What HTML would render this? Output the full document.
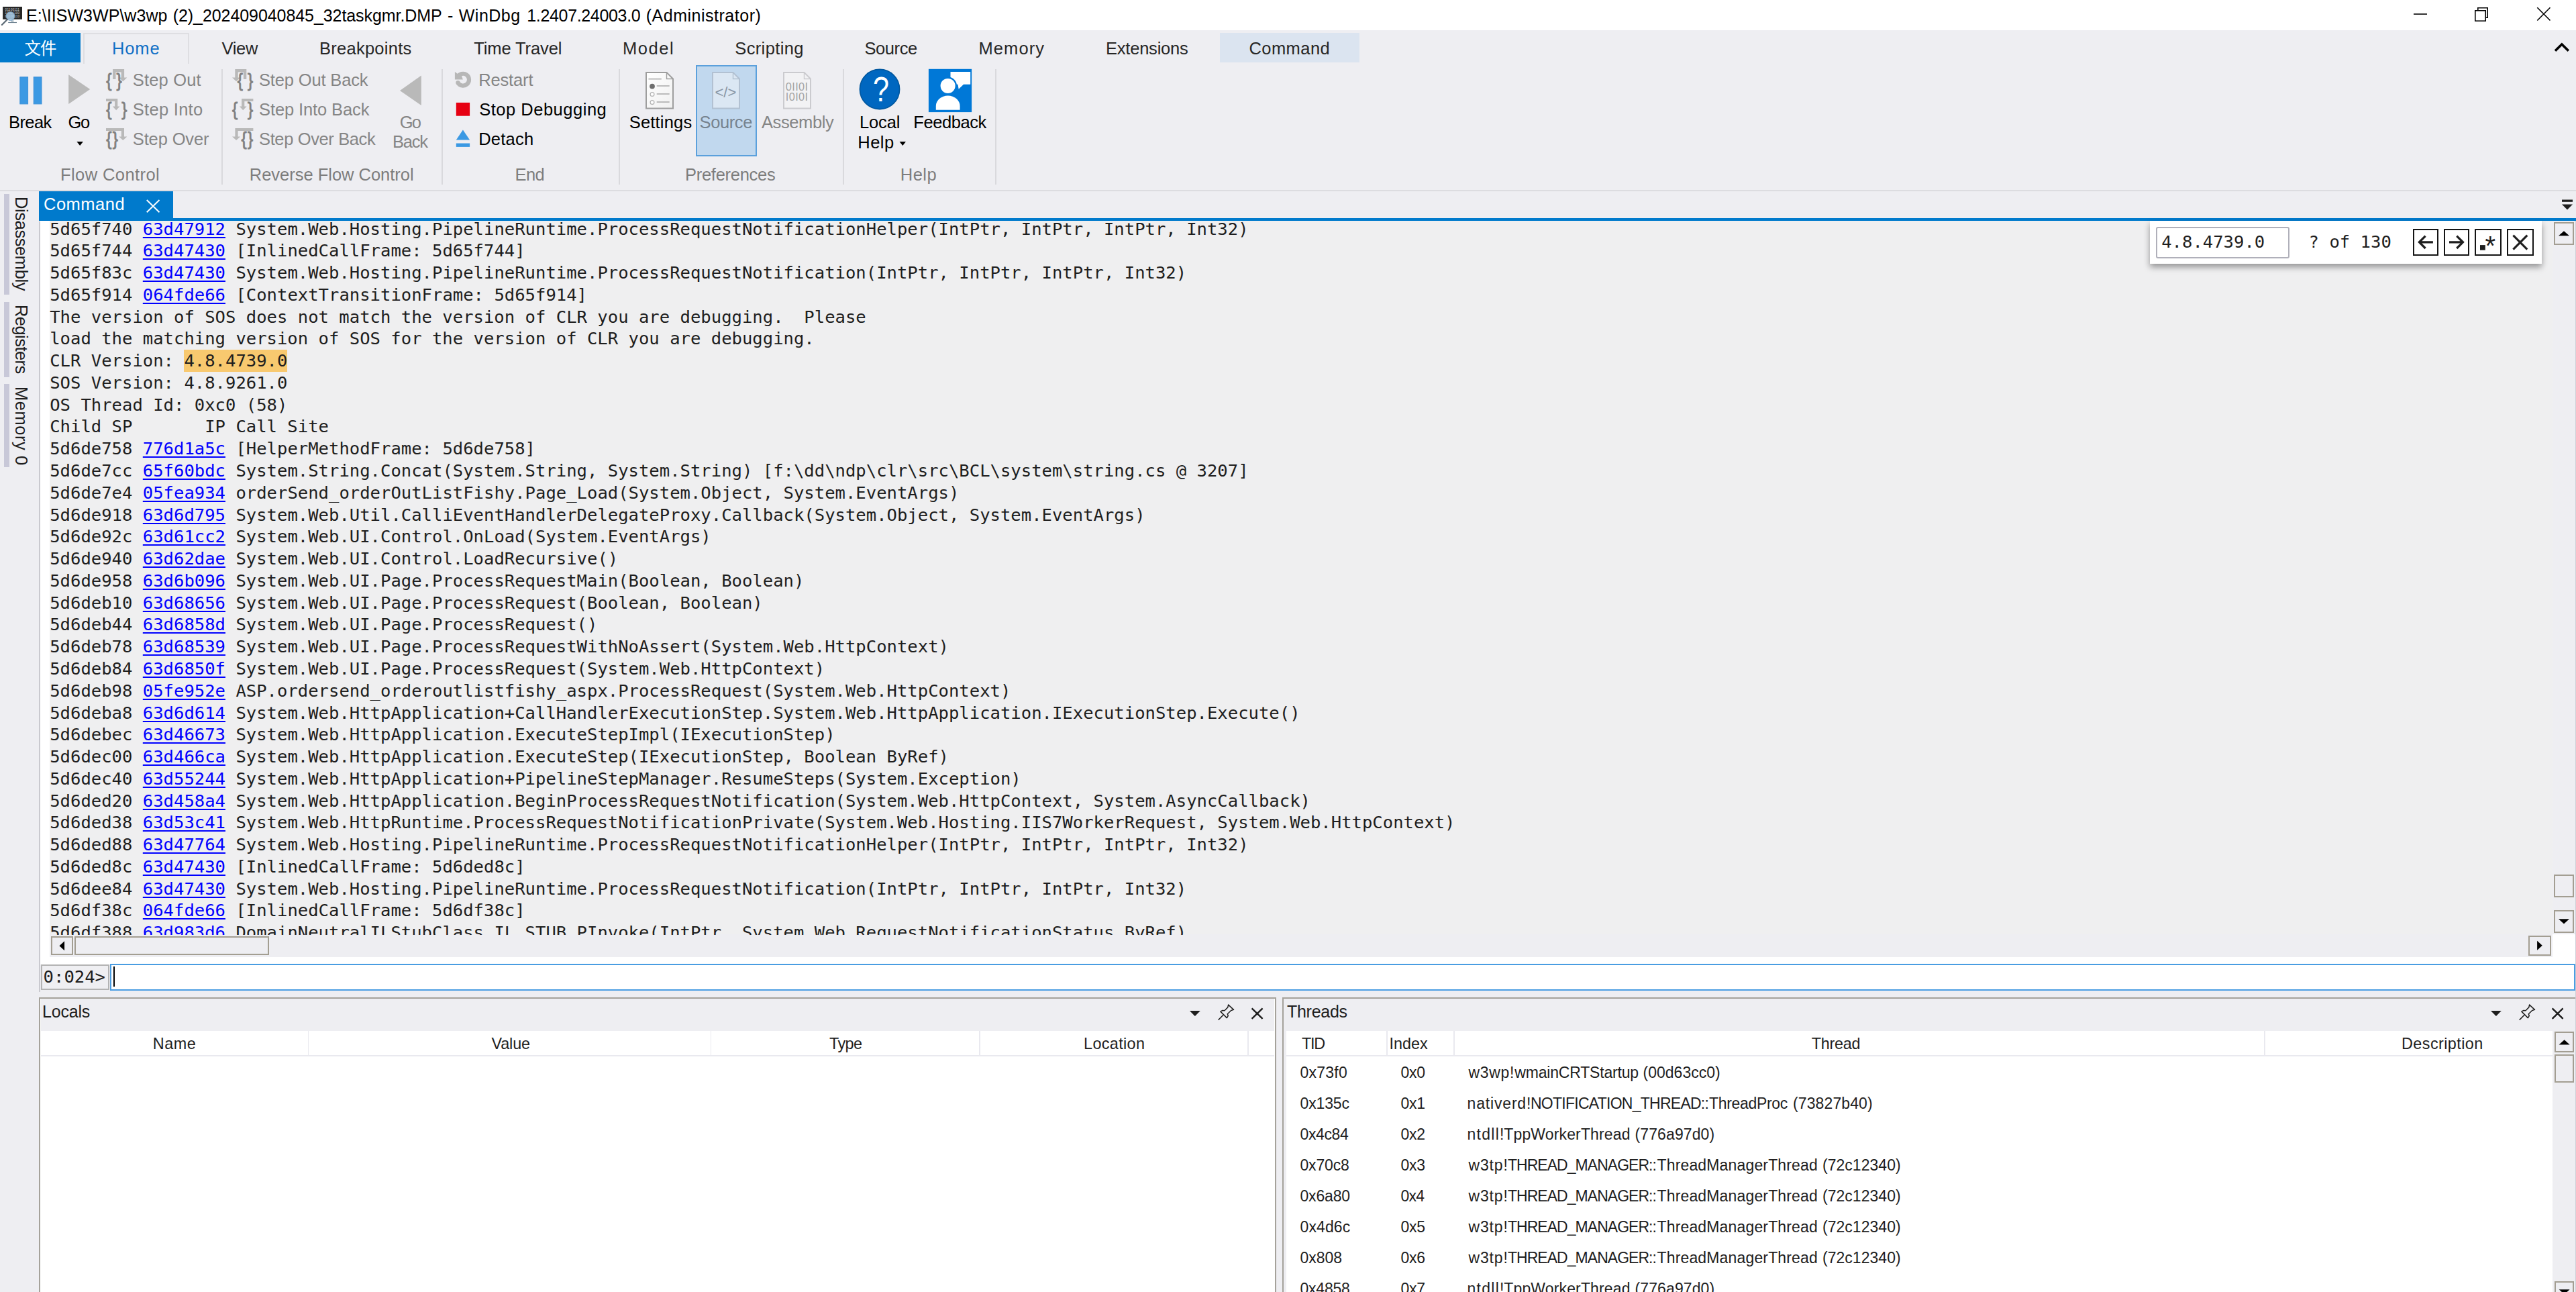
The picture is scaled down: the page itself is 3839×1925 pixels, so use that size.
<!DOCTYPE html>
<html><head><meta charset="utf-8"><title>WinDbg</title>
<style>
html,body{margin:0;padding:0;}
body{width:3839px;height:1925px;overflow:hidden;background:#eeeef2;position:relative;font-family:'Liberation Sans', sans-serif;}
.a{position:absolute;box-sizing:border-box;}
.t{white-space:pre;}

.mono{font:25.593px 'DejaVu Sans Mono', 'Liberation Mono', monospace;color:#1e1e1e;white-space:pre;}
.ml{position:absolute;left:0.2px;height:32.774px;line-height:32.774px;}
.lk{color:#0000ff;text-decoration:underline;text-decoration-thickness:1.6px;text-underline-offset:3px;}

</style></head><body>
<div class="a" style="left:0px;top:0px;width:3839px;height:45px;background:#fff;"></div>
<svg class="a" style="left:0px;top:0px;" width="40" height="45" viewBox="0 0 40 45">
<rect x="4.1" y="10" width="28.9" height="18.8" fill="#262626"/>
<text x="7.6" y="16.4" font-family="Liberation Sans, sans-serif" font-size="4.6" fill="#dcdcdc" letter-spacing="0.25">01100111</text>
<text x="7.6" y="21.4" font-family="Liberation Sans, sans-serif" font-size="4.6" fill="#dcdcdc" letter-spacing="0.25">10011100</text>
<text x="7.6" y="26.4" font-family="Liberation Sans, sans-serif" font-size="4.6" fill="#dcdcdc" letter-spacing="0.25">01100110</text>
<rect x="16.3" y="28.8" width="4.1" height="4.3" fill="#b9c6cf"/>
<line x1="12.2" y1="33.5" x2="25" y2="33.5" stroke="#6e8291" stroke-width="1.2"/>
<circle cx="15.5" cy="24.1" r="6.4" fill="#a9cbe6" fill-opacity="0.88" stroke="#7ea6c8" stroke-width="0.9"/>
<line x1="10.9" y1="29" x2="2.9" y2="37" stroke="#5c6a76" stroke-width="2.3" stroke-linecap="round"/>
</svg>
<svg class="a" style="left:3580px;top:0px;" width="259" height="45" viewBox="0 0 259 45">
<line x1="17" y1="21" x2="37" y2="21" stroke="#000" stroke-width="1.6"/>
<rect x="108.8" y="15.8" width="15.4" height="15.4" fill="none" stroke="#000" stroke-width="1.6"/>
<path d="M112.8 15 V11.8 H127.2 V26.2 H124.5" fill="none" stroke="#000" stroke-width="1.6"/>
<path d="M201.3 11.3 L220.5 30.5 M220.5 11.3 L201.3 30.5" fill="none" stroke="#000" stroke-width="1.6"/>
</svg>
<div class="a" style="left:0px;top:49px;width:120px;height:44px;background:#0079cb;"></div>
<div class="a" style="left:124px;top:49px;width:158px;height:45.75px;background:#eeeef2;border:2px solid #dedee2;border-bottom:none;"></div>
<div class="a" style="left:1818px;top:49px;width:208px;height:43.75px;background:#dbe4f0;"></div>
<svg class="a" style="left:3800px;top:58px;" width="36" height="26" viewBox="0 0 36 26"><polyline points="8,17.8 17.9,8 27.8,17.8" fill="none" stroke="#000" stroke-width="3.6"/></svg>
<div class="a" style="left:330.25px;top:103px;width:1.5px;height:171.5px;background:#d9d9dd;"></div>
<div class="a" style="left:658.25px;top:103px;width:1.5px;height:171.5px;background:#d9d9dd;"></div>
<div class="a" style="left:922.15px;top:103px;width:1.5px;height:171.5px;background:#d9d9dd;"></div>
<div class="a" style="left:1256.35px;top:103px;width:1.5px;height:171.5px;background:#d9d9dd;"></div>
<div class="a" style="left:1483.15px;top:103px;width:1.5px;height:171.5px;background:#d9d9dd;"></div>
<div class="a" style="left:0px;top:283px;width:3839px;height:1.5px;background:#dcdce0;"></div>
<svg class="a" style="left:20px;top:105px;" width="130" height="120" viewBox="0 0 130 120">
<rect x="9.8" y="9.8" width="11.8" height="40.1" fill="#3b99e3" stroke="#3c8fd8" stroke-width="1"/>
<rect x="30.2" y="9.8" width="11.8" height="40.1" fill="#3b99e3" stroke="#3c8fd8" stroke-width="1"/>
<polygon points="82.2,6.3 114.2,27.9 82.2,50" fill="#b9b9b9"/>
<polygon points="94.4,106 103.9,106 99.15,111.9" fill="#000"/>
</svg>
<svg class="a" style="left:158.2px;top:103.2px;overflow:visible;" width="32" height="34" viewBox="0 0 32 34"><path d="M12.3 15 V2.2 H24.9 V13" fill="none" stroke="#b9b9b9" stroke-width="4.4"/><polygon points="19.2,12.5 31.4,12.5 25.3,18.2" fill="#b9b9b9"/><text transform="translate(4.3,25.9) scale(0.86,1)" text-anchor="middle" font-family="Liberation Sans, sans-serif" font-size="28.5" fill="#808080" stroke="#808080" stroke-width="0.9">{</text><text transform="translate(19.5,25.9) scale(0.86,1)" text-anchor="middle" font-family="Liberation Sans, sans-serif" font-size="28.5" fill="#808080" stroke="#808080" stroke-width="0.9">}</text></svg>
<svg class="a" style="left:158.2px;top:147.4px;overflow:visible;" width="32" height="34" viewBox="0 0 32 34"><path d="M0 2 H15.2 V12" fill="none" stroke="#b9b9b9" stroke-width="4.2"/><polygon points="9.8,11.6 20.5,11.6 15.15,17.2" fill="#b9b9b9"/><text transform="translate(4.3,25.4) scale(0.86,1)" text-anchor="middle" font-family="Liberation Sans, sans-serif" font-size="28.5" fill="#808080" stroke="#808080" stroke-width="0.9">{</text><text transform="translate(27.3,25.4) scale(0.86,1)" text-anchor="middle" font-family="Liberation Sans, sans-serif" font-size="28.5" fill="#808080" stroke="#808080" stroke-width="0.9">}</text></svg>
<svg class="a" style="left:158.2px;top:191.3px;overflow:visible;" width="32" height="34" viewBox="0 0 32 34"><path d="M0 2 H24.9 V13" fill="none" stroke="#b9b9b9" stroke-width="4.2"/><polygon points="19.2,12.5 31.4,12.5 25.3,17.9" fill="#b9b9b9"/><text transform="translate(4.3,25.4) scale(0.86,1)" text-anchor="middle" font-family="Liberation Sans, sans-serif" font-size="28.5" fill="#808080" stroke="#808080" stroke-width="0.9">{</text><text transform="translate(13.9,25.4) scale(0.86,1)" text-anchor="middle" font-family="Liberation Sans, sans-serif" font-size="28.5" fill="#808080" stroke="#808080" stroke-width="0.9">}</text></svg>
<svg class="a" style="left:346.2px;top:103.2px;overflow:visible;" width="32" height="34" viewBox="0 0 32 34"><path d="M19.1 15 V2.2 H6.5 V13" fill="none" stroke="#b9b9b9" stroke-width="4.4"/><polygon points="12.2,12.5 0.0,12.5 6.1,18.2" fill="#b9b9b9"/><text transform="translate(27.1,25.9) scale(0.86,1)" text-anchor="middle" font-family="Liberation Sans, sans-serif" font-size="28.5" fill="#808080" stroke="#808080" stroke-width="0.9">}</text><text transform="translate(11.9,25.9) scale(0.86,1)" text-anchor="middle" font-family="Liberation Sans, sans-serif" font-size="28.5" fill="#808080" stroke="#808080" stroke-width="0.9">{</text></svg>
<svg class="a" style="left:346.2px;top:147.4px;overflow:visible;" width="32" height="34" viewBox="0 0 32 34"><path d="M31.4 2 H16.2 V12" fill="none" stroke="#b9b9b9" stroke-width="4.2"/><polygon points="21.6,11.6 10.9,11.6 16.25,17.2" fill="#b9b9b9"/><text transform="translate(27.1,25.4) scale(0.86,1)" text-anchor="middle" font-family="Liberation Sans, sans-serif" font-size="28.5" fill="#808080" stroke="#808080" stroke-width="0.9">}</text><text transform="translate(4.1,25.4) scale(0.86,1)" text-anchor="middle" font-family="Liberation Sans, sans-serif" font-size="28.5" fill="#808080" stroke="#808080" stroke-width="0.9">{</text></svg>
<svg class="a" style="left:346.2px;top:191.3px;overflow:visible;" width="32" height="34" viewBox="0 0 32 34"><path d="M31.4 2 H6.5 V13" fill="none" stroke="#b9b9b9" stroke-width="4.2"/><polygon points="12.2,12.5 0.0,12.5 6.1,17.9" fill="#b9b9b9"/><text transform="translate(27.1,25.4) scale(0.86,1)" text-anchor="middle" font-family="Liberation Sans, sans-serif" font-size="28.5" fill="#808080" stroke="#808080" stroke-width="0.9">}</text><text transform="translate(17.5,25.4) scale(0.86,1)" text-anchor="middle" font-family="Liberation Sans, sans-serif" font-size="28.5" fill="#808080" stroke="#808080" stroke-width="0.9">{</text></svg>
<svg class="a" style="left:590px;top:105px;" width="45" height="60" viewBox="0 0 45 60"><polygon points="37.8,7.5 6,29.9 37.8,52" fill="#b9b9b9"/></svg>
<svg class="a" style="left:672px;top:100px;" width="36" height="125" viewBox="0 0 36 125">
<path d="M10.03 14.94 A8.9 8.9 0 1 1 10.4 23.15" fill="none" stroke="#b7b7b7" stroke-width="6.2"/>
<circle cx="10.4" cy="23.15" r="3.1" fill="#b7b7b7"/>
<polygon points="5.9,7 9.5,9.8 15,9.8 17.8,18.4 5.9,18.4" fill="#b7b7b7"/>
<rect x="7.8" y="52.9" width="20.3" height="19.8" fill="#e60012"/>
<polygon points="17.9,93.4 28.1,108.5 7.8,108.5" fill="#3b99e3"/>
<rect x="7.8" y="113.5" width="20.3" height="5.4" fill="#3b99e3"/>
</svg>
<div class="a" style="left:1037px;top:97.3px;width:91.1px;height:135.6px;background:#c1d8ee;border:2px solid #5ba0dc;"></div>
<svg class="a" style="left:962px;top:107.3px;overflow:visible;" width="42" height="55.4" viewBox="0 0 42 55.4"><path d="M1 1 H31.5 L41 10.5 V54.4 H1 Z" fill="url(#g1)" stroke="#9e9e9e" stroke-width="2"/><path d="M31.5 0.8 V10.5 H41.2" fill="none" stroke="#9e9e9e" stroke-width="1.4"/>
<defs><linearGradient id="g1" x1="0" y1="0" x2="1" y2="1"><stop offset="0" stop-color="#fff"/><stop offset="1" stop-color="#f0f0f0"/></linearGradient></defs>
<line x1="4.4" y1="10.7" x2="23.8" y2="10.7" stroke="#a8a8a8" stroke-width="1.5"/>
<circle cx="10" cy="21.6" r="3.9" fill="#6e6e6e"/>
<circle cx="10" cy="33.5" r="2.9" fill="#fff" stroke="#b4b4b4" stroke-width="1.3"/>
<circle cx="10" cy="45.6" r="2.9" fill="#fff" stroke="#b4b4b4" stroke-width="1.3"/>
<line x1="16.7" y1="21" x2="35.7" y2="21" stroke="#a8a8a8" stroke-width="1.5"/>
<line x1="16.7" y1="33" x2="35.7" y2="33" stroke="#a8a8a8" stroke-width="1.5"/>
<line x1="16.7" y1="45" x2="35.7" y2="45" stroke="#a8a8a8" stroke-width="1.5"/>
</svg>
<svg class="a" style="left:1061px;top:107.3px;overflow:visible;" width="42" height="55.4" viewBox="0 0 42 55.4"><path d="M1 1 H31.5 L41 10.5 V54.4 H1 Z" fill="#dbe7f3" stroke="#b2c1d2" stroke-width="2"/><path d="M31.5 0.8 V10.5 H41.2" fill="none" stroke="#b2c1d2" stroke-width="1.4"/>
<text x="20.4" y="38.4" text-anchor="middle" font-family="Liberation Sans, sans-serif" font-size="22" fill="#8896a6">&lt;/&gt;</text>
</svg>
<svg class="a" style="left:1167px;top:107.3px;overflow:visible;" width="42" height="55.4" viewBox="0 0 42 55.4"><path d="M1 1 H31.5 L41 10.5 V54.4 H1 Z" fill="#f2f2f4" stroke="#cbcbcf" stroke-width="2"/><path d="M31.5 0.8 V10.5 H41.2" fill="none" stroke="#cbcbcf" stroke-width="1.4"/>
<text x="20.6" y="27.6" text-anchor="middle" font-family="Liberation Sans, sans-serif" font-size="16.3" fill="#a3a3a3" letter-spacing="0.4">0II0I</text>
<text x="20.6" y="43.1" text-anchor="middle" font-family="Liberation Sans, sans-serif" font-size="16.3" fill="#a3a3a3" letter-spacing="0.4">I0I0I</text>
</svg>
<svg class="a" style="left:1278px;top:100px;" width="175" height="125" viewBox="0 0 175 125">
<circle cx="33" cy="33" r="29.6" fill="#0067c0" stroke="#00579f" stroke-width="1.6"/>
<text transform="translate(35,50.9) scale(0.84,1)" x="0" y="0" text-anchor="middle" font-family="Liberation Sans, sans-serif" font-size="51.5" fill="#fff">?</text>
<rect x="105.9" y="2.8" width="64.2" height="64.3" fill="#0078d7"/>
<path d="M138.5 6.9 H168.2 V25.7 H158 L150.7 32.8 L149.5 25.7 H138.5 Z" fill="#fff"/>
<circle cx="134.6" cy="27.9" r="13.4" fill="#0078d7"/>
<circle cx="134.6" cy="27.9" r="11" fill="#fff"/>
<path d="M116.8 63.7 V58 A17.9 15.4 0 0 1 152.6 58 V63.7 Z" fill="#fff"/>
<polygon points="62.5,111 72,111 67.25,116.9" fill="#000"/>
</svg>
<div class="a" style="left:6px;top:289.2px;width:7.8px;height:149.5px;background:#c8c8d8;"></div>
<div class="a" style="left:6px;top:449.6px;width:7.8px;height:112.6px;background:#c8c8d8;"></div>
<div class="a" style="left:6px;top:572.4px;width:7.8px;height:124.1px;background:#c8c8d8;"></div>
<div class="a" style="left:58px;top:285px;width:200px;height:41px;background:#007acc;"></div>
<div class="a" style="left:58px;top:325px;width:3781px;height:4px;background:#007acc;"></div>
<svg class="a" style="left:214px;top:294px;" width="28" height="26" viewBox="0 0 28 26"><path d="M4.75 4 L23.5 22.25 M23.5 4 L4.75 22.25" stroke="#fff" stroke-width="1.9" fill="none"/></svg>
<svg class="a" style="left:3812px;top:292px;" width="26" height="24" viewBox="0 0 26 24"><rect x="6" y="5.5" width="16" height="3.3" fill="#1e1e1e"/><polygon points="6,12.5 22,12.5 14,20.5" fill="#1e1e1e"/></svg>
<div class="a" style="left:58px;top:329.5px;width:2px;height:1148px;background:#c9c9cf;"></div>
<div class="a" style="left:60px;top:329px;width:3779px;height:1108px;background:#fff;"></div>
<div class="a" style="left:74px;top:329px;width:3730px;height:1063.5px;background:#efeff0;"></div>
<div class="a" style="left:3804px;top:329px;width:35px;height:1063px;background:#eeeef2;"></div>
<div class="a" style="left:74px;top:1392px;width:3730px;height:33.9px;background:#eeeef2;"></div>
<div class="a" style="left:3806px;top:331px;width:30px;height:33.5px;background:#eeeef2;border:2px solid #a39e92;"></div>
<svg class="a" style="left:3806px;top:331px;" width="30" height="33.5" viewBox="0 0 30 33.5"><polygon points="7.0,20.35 23.0,20.35 15.0,13.15" fill="#000"/></svg>
<div class="a" style="left:3806px;top:1302.5px;width:30px;height:34.5px;background:#eeeef2;border:2px solid #a39e92;"></div>
<div class="a" style="left:3806px;top:1356.1px;width:30px;height:33.9px;background:#eeeef2;border:2px solid #a39e92;"></div>
<svg class="a" style="left:3806px;top:1356.1px;" width="30" height="33.9" viewBox="0 0 30 33.9"><polygon points="7.0,13.35 23.0,13.35 15.0,20.55" fill="#000"/></svg>
<div class="a" style="left:76.25px;top:1394.5px;width:32.5px;height:28.5px;background:#eeeef2;border:2px solid #a39e92;"></div>
<svg class="a" style="left:76.25px;top:1394.5px;" width="32.5" height="28.5" viewBox="0 0 32.5 28.5"><polygon points="20.05,7.25 20.05,21.25 12.45,14.25" fill="#000"/></svg>
<div class="a" style="left:111.25px;top:1394.5px;width:290px;height:28.5px;background:#eeeef2;border:2px solid #a39e92;"></div>
<div class="a" style="left:3768.1px;top:1394.2px;width:33.9px;height:29.7px;background:#eeeef2;border:2px solid #a39e92;"></div>
<svg class="a" style="left:3768.1px;top:1394.2px;" width="33.9" height="29.7" viewBox="0 0 33.9 29.7"><polygon points="13.149999999999999,7.85 13.149999999999999,21.85 20.75,14.85" fill="#000"/></svg>
<div class="a" style="left:60.5px;top:1436.75px;width:102.75px;height:38.6px;background:#efeff2;border:2px solid #b3b3b3;"></div>
<div class="a" style="left:164.25px;top:1436px;width:3673.75px;height:39.8px;background:#fff;border:2px solid #4a9de2;"></div>
<div class="a" style="left:169.2px;top:1439.5px;width:1.6px;height:30.5px;background:#000;"></div>
<div class="a" style="left:58px;top:1486px;width:1843.75px;height:440px;background:#fff;border:2.5px solid #a5a29b;border-bottom:none;"></div>
<div class="a" style="left:60.5px;top:1488px;width:1838.75px;height:47.5px;background:#eeeef2;"></div>
<div class="a" style="left:1910.75px;top:1486px;width:1930px;height:440px;background:#fff;border:2.5px solid #a5a29b;border-bottom:none;border-right:none;"></div>
<div class="a" style="left:1913.25px;top:1488px;width:1926px;height:47.5px;background:#eeeef2;"></div>
<div class="a" style="left:1913.25px;top:1535.5px;width:3.75px;height:390px;background:#eeeef2;"></div>
<div class="a" style="left:3803.8px;top:1535.5px;width:36px;height:390px;background:#eeeef2;"></div>
<div class="a" style="left:60.5px;top:1572.3px;width:1838.75px;height:1.6px;background:#e9e9ef;"></div>
<div class="a" style="left:458.7px;top:1535.5px;width:1.6px;height:37px;background:#e9e9ef;"></div>
<div class="a" style="left:1058.7px;top:1535.5px;width:1.6px;height:37px;background:#e9e9ef;"></div>
<div class="a" style="left:1459.2px;top:1535.5px;width:1.6px;height:37px;background:#e9e9ef;"></div>
<div class="a" style="left:1859.2px;top:1535.5px;width:1.6px;height:37px;background:#e9e9ef;"></div>
<div class="a" style="left:1917px;top:1572.3px;width:1886.8px;height:1.6px;background:#e9e9ef;"></div>
<div class="a" style="left:2065.95px;top:1535.5px;width:1.6px;height:37px;background:#e9e9ef;"></div>
<div class="a" style="left:2165.95px;top:1535.5px;width:1.6px;height:37px;background:#e9e9ef;"></div>
<div class="a" style="left:3374.2px;top:1535.5px;width:1.6px;height:37px;background:#e9e9ef;"></div>
<div class="a" style="left:3806.5px;top:1536.8px;width:29.3px;height:31.6px;background:#eeeef2;border:2px solid #a39e92;"></div>
<svg class="a" style="left:3806.5px;top:1536.8px;" width="29.3" height="31.6" viewBox="0 0 29.3 31.6"><polygon points="6.65,19.400000000000002 22.65,19.400000000000002 14.65,12.200000000000001" fill="#000"/></svg>
<div class="a" style="left:3806.5px;top:1570.7px;width:29.3px;height:42.8px;background:#eeeef2;border:2px solid #a39e92;"></div>
<div class="a" style="left:3806.5px;top:1908.8px;width:29.3px;height:31.6px;background:#eeeef2;border:2px solid #a39e92;"></div>
<svg class="a" style="left:3806.5px;top:1908.8px;" width="29.3" height="31.6" viewBox="0 0 29.3 31.6"><polygon points="6.65,12.200000000000001 22.65,12.200000000000001 14.65,19.400000000000002" fill="#000"/></svg>
<svg class="a" style="left:1773px;top:1500px;" width="20" height="20" viewBox="0 0 20 20"><polygon points="0,6 15.8,6 7.9,14.1" fill="#1e1e1e"/></svg>
<svg class="a" style="left:1814.5px;top:1494px;" width="28" height="30" viewBox="0 0 28 30"><g fill="none" stroke="#1e1e1e" stroke-width="1.5" stroke-linejoin="round">
<path d="M15.6 3.1 L23.5 10.4 L19.7 11.5 L14.3 16.7 L15.3 19.4 L13.4 22.6 L3.9 13.1 L6.9 11.5 L9.9 11.8 L14.8 6.9 Z" fill="none"/>
<path d="M8.5 17.7 L0.7 25.6"/></g></svg>
<svg class="a" style="left:1862.5px;top:1499px;" width="22" height="22" viewBox="0 0 22 22"><path d="M2.6 3.3 L18.6 18.9 M18.6 3.3 L2.6 18.9" stroke="#1e1e1e" stroke-width="2.4" fill="none"/></svg>
<svg class="a" style="left:3712px;top:1500px;" width="20" height="20" viewBox="0 0 20 20"><polygon points="0,6 15.8,6 7.9,14.1" fill="#1e1e1e"/></svg>
<svg class="a" style="left:3754.4px;top:1494px;" width="28" height="30" viewBox="0 0 28 30"><g fill="none" stroke="#1e1e1e" stroke-width="1.5" stroke-linejoin="round">
<path d="M15.6 3.1 L23.5 10.4 L19.7 11.5 L14.3 16.7 L15.3 19.4 L13.4 22.6 L3.9 13.1 L6.9 11.5 L9.9 11.8 L14.8 6.9 Z" fill="none"/>
<path d="M8.5 17.7 L0.7 25.6"/></g></svg>
<svg class="a" style="left:3801.4px;top:1499px;" width="22" height="22" viewBox="0 0 22 22"><path d="M2.6 3.3 L18.6 18.9 M18.6 3.3 L2.6 18.9" stroke="#1e1e1e" stroke-width="2.4" fill="none"/></svg>
<div class="a" style="left:274.25px;top:521.25px;width:153.75px;height:32.5px;background:#f8c96f;"></div>
<div class="a mono" style="left:74px;top:329.5px;width:3729px;height:1063px;overflow:hidden;background:transparent;"><div class="ml" style="top:-5.0px">5d65f740 <span class="lk">63d47912</span> System.Web.Hosting.PipelineRuntime.ProcessRequestNotificationHelper(IntPtr, IntPtr, IntPtr, Int32)</div>
<div class="ml" style="top:27.77px">5d65f744 <span class="lk">63d47430</span> [InlinedCallFrame: 5d65f744]</div>
<div class="ml" style="top:60.55px">5d65f83c <span class="lk">63d47430</span> System.Web.Hosting.PipelineRuntime.ProcessRequestNotification(IntPtr, IntPtr, IntPtr, Int32)</div>
<div class="ml" style="top:93.32px">5d65f914 <span class="lk">064fde66</span> [ContextTransitionFrame: 5d65f914]</div>
<div class="ml" style="top:126.1px">The version of SOS does not match the version of CLR you are debugging.  Please</div>
<div class="ml" style="top:158.87px">load the matching version of SOS for the version of CLR you are debugging.</div>
<div class="ml" style="top:191.64px">CLR Version: 4.8.4739.0</div>
<div class="ml" style="top:224.42px">SOS Version: 4.8.9261.0</div>
<div class="ml" style="top:257.19px">OS Thread Id: 0xc0 (58)</div>
<div class="ml" style="top:289.97px">Child SP       IP Call Site</div>
<div class="ml" style="top:322.74px">5d6de758 <span class="lk">776d1a5c</span> [HelperMethodFrame: 5d6de758]</div>
<div class="ml" style="top:355.51px">5d6de7cc <span class="lk">65f60bdc</span> System.String.Concat(System.String, System.String) [f:\dd\ndp\clr\src\BCL\system\string.cs @ 3207]</div>
<div class="ml" style="top:388.29px">5d6de7e4 <span class="lk">05fea934</span> orderSend_orderOutListFishy.Page_Load(System.Object, System.EventArgs)</div>
<div class="ml" style="top:421.06px">5d6de918 <span class="lk">63d6d795</span> System.Web.Util.CalliEventHandlerDelegateProxy.Callback(System.Object, System.EventArgs)</div>
<div class="ml" style="top:453.84px">5d6de92c <span class="lk">63d61cc2</span> System.Web.UI.Control.OnLoad(System.EventArgs)</div>
<div class="ml" style="top:486.61px">5d6de940 <span class="lk">63d62dae</span> System.Web.UI.Control.LoadRecursive()</div>
<div class="ml" style="top:519.38px">5d6de958 <span class="lk">63d6b096</span> System.Web.UI.Page.ProcessRequestMain(Boolean, Boolean)</div>
<div class="ml" style="top:552.16px">5d6deb10 <span class="lk">63d68656</span> System.Web.UI.Page.ProcessRequest(Boolean, Boolean)</div>
<div class="ml" style="top:584.93px">5d6deb44 <span class="lk">63d6858d</span> System.Web.UI.Page.ProcessRequest()</div>
<div class="ml" style="top:617.71px">5d6deb78 <span class="lk">63d68539</span> System.Web.UI.Page.ProcessRequestWithNoAssert(System.Web.HttpContext)</div>
<div class="ml" style="top:650.48px">5d6deb84 <span class="lk">63d6850f</span> System.Web.UI.Page.ProcessRequest(System.Web.HttpContext)</div>
<div class="ml" style="top:683.25px">5d6deb98 <span class="lk">05fe952e</span> ASP.ordersend_orderoutlistfishy_aspx.ProcessRequest(System.Web.HttpContext)</div>
<div class="ml" style="top:716.03px">5d6deba8 <span class="lk">63d6d614</span> System.Web.HttpApplication+CallHandlerExecutionStep.System.Web.HttpApplication.IExecutionStep.Execute()</div>
<div class="ml" style="top:748.8px">5d6debec <span class="lk">63d46673</span> System.Web.HttpApplication.ExecuteStepImpl(IExecutionStep)</div>
<div class="ml" style="top:781.58px">5d6dec00 <span class="lk">63d466ca</span> System.Web.HttpApplication.ExecuteStep(IExecutionStep, Boolean ByRef)</div>
<div class="ml" style="top:814.35px">5d6dec40 <span class="lk">63d55244</span> System.Web.HttpApplication+PipelineStepManager.ResumeSteps(System.Exception)</div>
<div class="ml" style="top:847.12px">5d6ded20 <span class="lk">63d458a4</span> System.Web.HttpApplication.BeginProcessRequestNotification(System.Web.HttpContext, System.AsyncCallback)</div>
<div class="ml" style="top:879.9px">5d6ded38 <span class="lk">63d53c41</span> System.Web.HttpRuntime.ProcessRequestNotificationPrivate(System.Web.Hosting.IIS7WorkerRequest, System.Web.HttpContext)</div>
<div class="ml" style="top:912.67px">5d6ded88 <span class="lk">63d47764</span> System.Web.Hosting.PipelineRuntime.ProcessRequestNotificationHelper(IntPtr, IntPtr, IntPtr, Int32)</div>
<div class="ml" style="top:945.45px">5d6ded8c <span class="lk">63d47430</span> [InlinedCallFrame: 5d6ded8c]</div>
<div class="ml" style="top:978.22px">5d6dee84 <span class="lk">63d47430</span> System.Web.Hosting.PipelineRuntime.ProcessRequestNotification(IntPtr, IntPtr, IntPtr, Int32)</div>
<div class="ml" style="top:1010.99px">5d6df38c <span class="lk">064fde66</span> [InlinedCallFrame: 5d6df38c]</div>
<div class="ml" style="top:1043.77px">5d6df388 <span class="lk">63d983d6</span> DomainNeutralILStubClass.IL_STUB_PInvoke(IntPtr, System.Web.RequestNotificationStatus ByRef)</div></div>
<div class="a mono" style="left:64.6px;top:1439.3px;line-height:32.774px;">0:024&gt;</div>
<div class="a" style="left:3204px;top:329px;width:584px;height:63.8px;background:#fff;box-shadow:0 5px 9px rgba(0,0,0,0.38);"></div>
<div class="a" style="left:3212.5px;top:337.5px;width:199.3px;height:47px;background:#fff;border:2px solid #b0b0ba;border-radius:3px;"></div>
<div class="a mono" style="left:3221.2px;top:344.40000000000003px;line-height:32.774px;">4.8.4739.0</div>
<div class="a mono" style="left:3440.6px;top:344.40000000000003px;line-height:32.774px;">? of 130</div>
<div class="a" style="left:3596.1px;top:341.1px;width:37.9px;height:39.5px;background:#fff;border:2px solid #141414;"></div>
<svg class="a" style="left:3596.1px;top:341.1px;" width="37.9" height="39.5" viewBox="0 0 37.9 39.5"><path d="M29.9 19.8 H9.5 M18.6 10.6 L9.4 19.8 L18.6 29" fill="none" stroke="#1e1e1e" stroke-width="3.2"/></svg>
<div class="a" style="left:3642.1px;top:341.1px;width:37.7px;height:39.5px;background:#fff;border:2px solid #141414;"></div>
<svg class="a" style="left:3642.1px;top:341.1px;" width="37.7" height="39.5" viewBox="0 0 37.7 39.5"><path d="M8 19.8 H28.4 M19.3 10.6 L28.5 19.8 L19.3 29" fill="none" stroke="#1e1e1e" stroke-width="3.2"/></svg>
<div class="a" style="left:3688.1px;top:341.1px;width:39.7px;height:39.5px;background:#fff;border:2px solid #141414;"></div>
<svg class="a" style="left:3688.1px;top:341.1px;" width="39.7" height="39.5" viewBox="0 0 39.7 39.5"><rect x="8" y="24.1" width="7.8" height="7.6" fill="#1e1e1e"/><text x="23.4" y="38.7" text-anchor="middle" font-family="Liberation Sans, sans-serif" font-size="40" fill="#1e1e1e">*</text></svg>
<div class="a" style="left:3736.1px;top:341.1px;width:39.8px;height:39.5px;background:#fff;border:2px solid #141414;"></div>
<svg class="a" style="left:3736.1px;top:341.1px;" width="39.8" height="39.5" viewBox="0 0 39.8 39.5"><path d="M9.4 9.6 L30.3 30.6 M30.3 9.6 L9.4 30.6" fill="none" stroke="#1e1e1e" stroke-width="3.1"/></svg>
<span class="a t" style="font:25px 'Liberation Sans', sans-serif;line-height:30px;color:#000;letter-spacing:0.046px;left:39px;top:8px;">E:\IISW3WP\w3wp</span>
<span class="a t" style="font:25px 'Liberation Sans', sans-serif;line-height:30px;color:#000;letter-spacing:-0.073px;left:257.75px;top:8px;">(2)_202409040845_32taskgmr.DMP</span>
<span class="a t" style="font:25px 'Liberation Sans', sans-serif;line-height:30px;color:#000;left:667px;top:8px;">-</span>
<span class="a t" style="font:25px 'Liberation Sans', sans-serif;line-height:30px;color:#000;letter-spacing:0.498px;left:683.75px;top:8px;">WinDbg</span>
<span class="a t" style="font:25px 'Liberation Sans', sans-serif;line-height:30px;color:#000;letter-spacing:-0.337px;left:785.25px;top:8px;">1.2407.24003.0</span>
<span class="a t" style="font:25px 'Liberation Sans', sans-serif;line-height:30px;color:#000;letter-spacing:0.511px;left:962.75px;top:8px;">(Administrator)</span>
<span class="a t" style="font:24.5px 'Liberation Sans', 'Noto Sans CJK SC', sans-serif;line-height:29px;color:#fff;letter-spacing:-0.9px;left:36.4px;top:58.1px;">文件</span>
<span class="a t" style="font:25.5px 'Liberation Sans', sans-serif;line-height:31px;color:#0f6fc6;letter-spacing:0.887px;left:167px;top:57.25px;">Home</span>
<span class="a t" style="font:25.5px 'Liberation Sans', sans-serif;line-height:31px;color:#262626;letter-spacing:-0.298px;left:330.5px;top:57.25px;">View</span>
<span class="a t" style="font:25.5px 'Liberation Sans', sans-serif;line-height:31px;color:#262626;letter-spacing:0.259px;left:476px;top:57.25px;">Breakpoints</span>
<span class="a t" style="font:25.5px 'Liberation Sans', sans-serif;line-height:31px;color:#262626;letter-spacing:-0.104px;left:706.25px;top:57.25px;">Time Travel</span>
<span class="a t" style="font:25.5px 'Liberation Sans', sans-serif;line-height:31px;color:#262626;letter-spacing:1.553px;left:928px;top:57.25px;">Model</span>
<span class="a t" style="font:25.5px 'Liberation Sans', sans-serif;line-height:31px;color:#262626;letter-spacing:0.371px;left:1095.25px;top:57.25px;">Scripting</span>
<span class="a t" style="font:25.5px 'Liberation Sans', sans-serif;line-height:31px;color:#262626;letter-spacing:-0.423px;left:1288.5px;top:57.25px;">Source</span>
<span class="a t" style="font:25.5px 'Liberation Sans', sans-serif;line-height:31px;color:#262626;letter-spacing:1.082px;left:1458.5px;top:57.25px;">Memory</span>
<span class="a t" style="font:25.5px 'Liberation Sans', sans-serif;line-height:31px;color:#262626;letter-spacing:-0.221px;left:1648px;top:57.25px;">Extensions</span>
<span class="a t" style="font:25.5px 'Liberation Sans', sans-serif;line-height:31px;color:#262626;letter-spacing:0.426px;left:1861.5px;top:57.25px;">Command</span>
<span class="a t" style="font:25.5px 'Liberation Sans', sans-serif;line-height:31px;color:#000;letter-spacing:-0.591px;left:13px;top:167.25px;">Break</span>
<span class="a t" style="font:25.5px 'Liberation Sans', sans-serif;line-height:31px;color:#000;letter-spacing:-1.335px;left:101.5px;top:167.25px;">Go</span>
<span class="a t" style="font:25.5px 'Liberation Sans', sans-serif;line-height:31px;color:#858585;letter-spacing:0.17px;left:197.75px;top:104px;">Step Out</span>
<span class="a t" style="font:25.5px 'Liberation Sans', sans-serif;line-height:31px;color:#858585;letter-spacing:0.295px;left:197.75px;top:148px;">Step Into</span>
<span class="a t" style="font:25.5px 'Liberation Sans', sans-serif;line-height:31px;color:#858585;letter-spacing:-0.132px;left:197.75px;top:191.6px;">Step Over</span>
<span class="a t" style="font:25.5px 'Liberation Sans', sans-serif;line-height:31px;color:#858585;letter-spacing:-0.16px;left:386px;top:104px;">Step Out Back</span>
<span class="a t" style="font:25.5px 'Liberation Sans', sans-serif;line-height:31px;color:#858585;letter-spacing:-0.104px;left:386px;top:148px;">Step Into Back</span>
<span class="a t" style="font:25.5px 'Liberation Sans', sans-serif;line-height:31px;color:#858585;letter-spacing:-0.371px;left:386px;top:191.6px;">Step Over Back</span>
<span class="a t" style="font:25.5px 'Liberation Sans', sans-serif;line-height:31px;color:#858585;letter-spacing:-1.835px;left:595.8px;top:167.4px;">Go</span>
<span class="a t" style="font:25.5px 'Liberation Sans', sans-serif;line-height:31px;color:#858585;letter-spacing:-1.247px;left:585px;top:196.4px;">Back</span>
<span class="a t" style="font:25.5px 'Liberation Sans', sans-serif;line-height:31px;color:#858585;letter-spacing:-0.151px;left:713.2px;top:104px;">Restart</span>
<span class="a t" style="font:25.5px 'Liberation Sans', sans-serif;line-height:31px;color:#000;letter-spacing:0.514px;left:714.2px;top:147.8px;">Stop Debugging</span>
<span class="a t" style="font:25.5px 'Liberation Sans', sans-serif;line-height:31px;color:#000;letter-spacing:0.217px;left:713.2px;top:191.6px;">Detach</span>
<span class="a t" style="font:25.5px 'Liberation Sans', sans-serif;line-height:31px;color:#000;letter-spacing:0.173px;left:937.8px;top:167px;">Settings</span>
<span class="a t" style="font:25.5px 'Liberation Sans', sans-serif;line-height:31px;color:#76838f;letter-spacing:-0.403px;left:1042.6px;top:167px;">Source</span>
<span class="a t" style="font:25.5px 'Liberation Sans', sans-serif;line-height:31px;color:#858585;letter-spacing:-0.397px;left:1135px;top:167px;">Assembly</span>
<span class="a t" style="font:25.5px 'Liberation Sans', sans-serif;line-height:31px;color:#000;letter-spacing:-0.124px;left:1281px;top:167.25px;">Local</span>
<span class="a t" style="font:25.5px 'Liberation Sans', sans-serif;line-height:31px;color:#000;letter-spacing:0.479px;left:1278.3px;top:196.5px;">Help</span>
<span class="a t" style="font:25.5px 'Liberation Sans', sans-serif;line-height:31px;color:#000;letter-spacing:-0.419px;left:1361.3px;top:167.25px;">Feedback</span>
<span class="a t" style="font:25.5px 'Liberation Sans', sans-serif;line-height:31px;color:#7d7d7d;letter-spacing:0.413px;left:90px;top:244.75px;">Flow Control</span>
<span class="a t" style="font:25.5px 'Liberation Sans', sans-serif;line-height:31px;color:#7d7d7d;letter-spacing:-0.013px;left:371.75px;top:244.75px;">Reverse Flow Control</span>
<span class="a t" style="font:25.5px 'Liberation Sans', sans-serif;line-height:31px;color:#7d7d7d;letter-spacing:-0.595px;left:767.5px;top:244.75px;">End</span>
<span class="a t" style="font:25.5px 'Liberation Sans', sans-serif;line-height:31px;color:#7d7d7d;letter-spacing:-0.274px;left:1021px;top:244.75px;">Preferences</span>
<span class="a t" style="font:25.5px 'Liberation Sans', sans-serif;line-height:31px;color:#7d7d7d;letter-spacing:0.496px;left:1341.75px;top:244.75px;">Help</span>
<span class="a t" style="font:25.5px 'Liberation Sans', sans-serif;line-height:31px;color:#1e1e1e;letter-spacing:-0.403px;left:22.6px;top:269px;transform-origin:0 24px;transform:rotate(90deg);">Disassembly</span>
<span class="a t" style="font:25.5px 'Liberation Sans', sans-serif;line-height:31px;color:#1e1e1e;letter-spacing:-0.557px;left:22.6px;top:429.5px;transform-origin:0 24px;transform:rotate(90deg);">Registers</span>
<span class="a t" style="font:25.5px 'Liberation Sans', sans-serif;line-height:31px;color:#1e1e1e;letter-spacing:0.547px;left:22.6px;top:552px;transform-origin:0 24px;transform:rotate(90deg);">Memory 0</span>
<span class="a t" style="font:25.5px 'Liberation Sans', sans-serif;line-height:31px;color:#fff;letter-spacing:0.509px;left:65px;top:288.5px;">Command</span>
<span class="a t" style="font:25px 'Liberation Sans', sans-serif;line-height:30px;color:#1e1e1e;letter-spacing:-0.203px;left:63px;top:1491.5px;">Locals</span>
<span class="a t" style="font:25px 'Liberation Sans', sans-serif;line-height:30px;color:#1e1e1e;letter-spacing:-0.285px;left:1918px;top:1491.5px;">Threads</span>
<span class="a t" style="font:23.4px 'Liberation Sans', sans-serif;line-height:28px;color:#1e1e1e;letter-spacing:0.538px;left:227.75px;top:1540.5px;">Name</span>
<span class="a t" style="font:23.4px 'Liberation Sans', sans-serif;line-height:28px;color:#1e1e1e;letter-spacing:-0.145px;left:732.5px;top:1540.5px;">Value</span>
<span class="a t" style="font:23.4px 'Liberation Sans', sans-serif;line-height:28px;color:#1e1e1e;letter-spacing:-0.567px;left:1236px;top:1540.5px;">Type</span>
<span class="a t" style="font:23.4px 'Liberation Sans', sans-serif;line-height:28px;color:#1e1e1e;letter-spacing:0.368px;left:1615px;top:1540.5px;">Location</span>
<span class="a t" style="font:23.4px 'Liberation Sans', sans-serif;line-height:28px;color:#1e1e1e;letter-spacing:-1.268px;left:1940px;top:1540.5px;">TID</span>
<span class="a t" style="font:23.4px 'Liberation Sans', sans-serif;line-height:28px;color:#1e1e1e;letter-spacing:-0.006px;left:2070.5px;top:1540.5px;">Index</span>
<span class="a t" style="font:23.4px 'Liberation Sans', sans-serif;line-height:28px;color:#1e1e1e;letter-spacing:-0.281px;left:2699.8px;top:1540.5px;">Thread</span>
<span class="a t" style="font:23.4px 'Liberation Sans', sans-serif;line-height:28px;color:#1e1e1e;letter-spacing:0.431px;left:3579px;top:1540.5px;">Description</span>
<span class="a t" style="font:23px 'Liberation Sans', sans-serif;line-height:28px;color:#1e1e1e;letter-spacing:0.247px;left:1937.5px;top:1583.5px;">0x73f0</span>
<span class="a t" style="font:23px 'Liberation Sans', sans-serif;line-height:28px;color:#1e1e1e;letter-spacing:-0.271px;left:2087.5px;top:1583.5px;">0x0</span>
<span class="a t" style="font:23px 'Liberation Sans', sans-serif;line-height:28px;color:#1e1e1e;letter-spacing:0.674px;left:2188.5px;top:1583.5px;">w3wp!</span>
<span class="a t" style="font:23px 'Liberation Sans', sans-serif;line-height:28px;color:#1e1e1e;letter-spacing:-0.191px;left:2257.25px;top:1583.5px;">wmainCRTStartup</span>
<span class="a t" style="font:23px 'Liberation Sans', sans-serif;line-height:28px;color:#1e1e1e;letter-spacing:0.01px;left:2448.5px;top:1583.5px;">(00d63cc0)</span>
<span class="a t" style="font:23px 'Liberation Sans', sans-serif;line-height:28px;color:#1e1e1e;letter-spacing:-0.133px;left:1937.5px;top:1629.5px;">0x135c</span>
<span class="a t" style="font:23px 'Liberation Sans', sans-serif;line-height:28px;color:#1e1e1e;letter-spacing:-0.271px;left:2087.5px;top:1629.5px;">0x1</span>
<span class="a t" style="font:23px 'Liberation Sans', sans-serif;line-height:28px;color:#1e1e1e;letter-spacing:0.834px;left:2186.5px;top:1629.5px;">nativerd!</span>
<span class="a t" style="font:23px 'Liberation Sans', sans-serif;line-height:28px;color:#1e1e1e;letter-spacing:-0.74px;left:2281px;top:1629.5px;">NOTIFICATION_THREAD::</span>
<span class="a t" style="font:23px 'Liberation Sans', sans-serif;line-height:28px;color:#1e1e1e;letter-spacing:-0.324px;left:2547px;top:1629.5px;">ThreadProc</span>
<span class="a t" style="font:23px 'Liberation Sans', sans-serif;line-height:28px;color:#1e1e1e;letter-spacing:0.112px;left:2672px;top:1629.5px;">(73827b40)</span>
<span class="a t" style="font:23px 'Liberation Sans', sans-serif;line-height:28px;color:#1e1e1e;letter-spacing:-0.375px;left:1937.5px;top:1675.5px;">0x4c84</span>
<span class="a t" style="font:23px 'Liberation Sans', sans-serif;line-height:28px;color:#1e1e1e;letter-spacing:-0.271px;left:2087.5px;top:1675.5px;">0x2</span>
<span class="a t" style="font:23px 'Liberation Sans', sans-serif;line-height:28px;color:#1e1e1e;letter-spacing:1.261px;left:2186.5px;top:1675.5px;">ntdll!</span>
<span class="a t" style="font:23px 'Liberation Sans', sans-serif;line-height:28px;color:#1e1e1e;letter-spacing:0.149px;left:2241.25px;top:1675.5px;">TppWorkerThread</span>
<span class="a t" style="font:23px 'Liberation Sans', sans-serif;line-height:28px;color:#1e1e1e;letter-spacing:0.112px;left:2436.5px;top:1675.5px;">(776a97d0)</span>
<span class="a t" style="font:23px 'Liberation Sans', sans-serif;line-height:28px;color:#1e1e1e;letter-spacing:-0.175px;left:1937.5px;top:1721.5px;">0x70c8</span>
<span class="a t" style="font:23px 'Liberation Sans', sans-serif;line-height:28px;color:#1e1e1e;letter-spacing:-0.271px;left:2087.5px;top:1721.5px;">0x3</span>
<span class="a t" style="font:23px 'Liberation Sans', sans-serif;line-height:28px;color:#1e1e1e;letter-spacing:0.854px;left:2188.5px;top:1721.5px;">w3tp!</span>
<span class="a t" style="font:23px 'Liberation Sans', sans-serif;line-height:28px;color:#1e1e1e;letter-spacing:-0.969px;left:2247px;top:1721.5px;">THREAD_MANAGER::</span>
<span class="a t" style="font:23px 'Liberation Sans', sans-serif;line-height:28px;color:#1e1e1e;letter-spacing:0.154px;left:2469.5px;top:1721.5px;">ThreadManagerThread</span>
<span class="a t" style="font:23px 'Liberation Sans', sans-serif;line-height:28px;color:#1e1e1e;letter-spacing:0.033px;left:2716px;top:1721.5px;">(72c12340)</span>
<span class="a t" style="font:23px 'Liberation Sans', sans-serif;line-height:28px;color:#1e1e1e;letter-spacing:-0.183px;left:1937.5px;top:1767.5px;">0x6a80</span>
<span class="a t" style="font:23px 'Liberation Sans', sans-serif;line-height:28px;color:#1e1e1e;letter-spacing:-0.771px;left:2087.5px;top:1767.5px;">0x4</span>
<span class="a t" style="font:23px 'Liberation Sans', sans-serif;line-height:28px;color:#1e1e1e;letter-spacing:0.854px;left:2188.5px;top:1767.5px;">w3tp!</span>
<span class="a t" style="font:23px 'Liberation Sans', sans-serif;line-height:28px;color:#1e1e1e;letter-spacing:-0.969px;left:2247px;top:1767.5px;">THREAD_MANAGER::</span>
<span class="a t" style="font:23px 'Liberation Sans', sans-serif;line-height:28px;color:#1e1e1e;letter-spacing:0.154px;left:2469.5px;top:1767.5px;">ThreadManagerThread</span>
<span class="a t" style="font:23px 'Liberation Sans', sans-serif;line-height:28px;color:#1e1e1e;letter-spacing:0.033px;left:2716px;top:1767.5px;">(72c12340)</span>
<span class="a t" style="font:23px 'Liberation Sans', sans-serif;line-height:28px;color:#1e1e1e;letter-spacing:0.117px;left:1937.5px;top:1813.5px;">0x4d6c</span>
<span class="a t" style="font:23px 'Liberation Sans', sans-serif;line-height:28px;color:#1e1e1e;letter-spacing:-0.271px;left:2087.5px;top:1813.5px;">0x5</span>
<span class="a t" style="font:23px 'Liberation Sans', sans-serif;line-height:28px;color:#1e1e1e;letter-spacing:0.854px;left:2188.5px;top:1813.5px;">w3tp!</span>
<span class="a t" style="font:23px 'Liberation Sans', sans-serif;line-height:28px;color:#1e1e1e;letter-spacing:-0.969px;left:2247px;top:1813.5px;">THREAD_MANAGER::</span>
<span class="a t" style="font:23px 'Liberation Sans', sans-serif;line-height:28px;color:#1e1e1e;letter-spacing:0.154px;left:2469.5px;top:1813.5px;">ThreadManagerThread</span>
<span class="a t" style="font:23px 'Liberation Sans', sans-serif;line-height:28px;color:#1e1e1e;letter-spacing:0.033px;left:2716px;top:1813.5px;">(72c12340)</span>
<span class="a t" style="font:23px 'Liberation Sans', sans-serif;line-height:28px;color:#1e1e1e;letter-spacing:-0.019px;left:1937.5px;top:1859.5px;">0x808</span>
<span class="a t" style="font:23px 'Liberation Sans', sans-serif;line-height:28px;color:#1e1e1e;letter-spacing:-0.271px;left:2087.5px;top:1859.5px;">0x6</span>
<span class="a t" style="font:23px 'Liberation Sans', sans-serif;line-height:28px;color:#1e1e1e;letter-spacing:0.854px;left:2188.5px;top:1859.5px;">w3tp!</span>
<span class="a t" style="font:23px 'Liberation Sans', sans-serif;line-height:28px;color:#1e1e1e;letter-spacing:-0.969px;left:2247px;top:1859.5px;">THREAD_MANAGER::</span>
<span class="a t" style="font:23px 'Liberation Sans', sans-serif;line-height:28px;color:#1e1e1e;letter-spacing:0.154px;left:2469.5px;top:1859.5px;">ThreadManagerThread</span>
<span class="a t" style="font:23px 'Liberation Sans', sans-serif;line-height:28px;color:#1e1e1e;letter-spacing:0.033px;left:2716px;top:1859.5px;">(72c12340)</span>
<span class="a t" style="font:23px 'Liberation Sans', sans-serif;line-height:28px;color:#1e1e1e;letter-spacing:-0.233px;left:1937.5px;top:1905.5px;">0x4858</span>
<span class="a t" style="font:23px 'Liberation Sans', sans-serif;line-height:28px;color:#1e1e1e;letter-spacing:-0.271px;left:2087.5px;top:1905.5px;">0x7</span>
<span class="a t" style="font:23px 'Liberation Sans', sans-serif;line-height:28px;color:#1e1e1e;letter-spacing:1.261px;left:2186.5px;top:1905.5px;">ntdll!</span>
<span class="a t" style="font:23px 'Liberation Sans', sans-serif;line-height:28px;color:#1e1e1e;letter-spacing:0.149px;left:2241.25px;top:1905.5px;">TppWorkerThread</span>
<span class="a t" style="font:23px 'Liberation Sans', sans-serif;line-height:28px;color:#1e1e1e;letter-spacing:0.112px;left:2436.5px;top:1905.5px;">(776a97d0)</span>
<div class="a" style="left:3838px;top:329px;width:1px;height:1596px;background:#cfcfd8"></div>
</body></html>
